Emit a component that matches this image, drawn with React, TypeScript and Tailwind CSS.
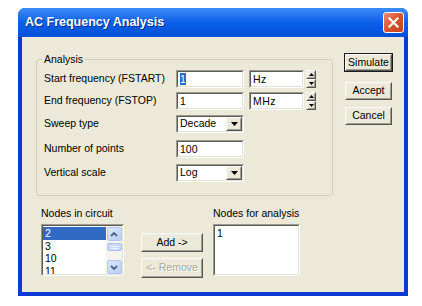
import React from 'react';

const Sunken = ({ className = '', children }: { className?: string; children?: React.ReactNode }) => (
  <div className={`border border-t-[#9c9a8f] border-l-[#9c9a8f] border-b-[#fefefe] border-r-[#fefefe] ${className}`}>
    <div className="h-full w-full border border-t-[#5a5a56] border-l-[#5a5a56] border-b-[#e4e2d8] border-r-[#e4e2d8] bg-white overflow-hidden">
      {children}
    </div>
  </div>
);

const Raised = ({ className = '', children }: { className?: string; children?: React.ReactNode }) => (
  <div className={`border border-t-[#fbfaf6] border-l-[#fbfaf6] border-b-[#55554f] border-r-[#55554f] ${className}`}>
    <div className="h-full w-full border border-t-[#ecebe4] border-l-[#ecebe4] border-b-[#a19f92] border-r-[#a19f92] bg-[#ECE9D8] flex items-center justify-center">
      {children}
    </div>
  </div>
);

function DownTri() {
  return (
    <svg width="7" height="4" viewBox="0 0 7 4">
      <path d="M0 0h7L3.5 4z" fill="#000" />
    </svg>
  );
}

function Combo({ value }: { value: string }) {
  return (
    <Sunken className="w-[68px] h-[18px]">
      <div className="flex h-full items-center">
        <span className="flex-1 pl-[2px] text-[10.5px] text-black">{value}</span>
        <Raised className="w-[16px] h-full">
          <DownTri />
        </Raised>
      </div>
    </Sunken>
  );
}

function Spinner() {
  return (
    <div className="flex flex-col w-[10px] h-[18px] ml-[2px]">
      <Raised className="h-[9px] w-full">
        <svg width="5" height="3" viewBox="0 0 5 3">
          <path d="M0 3h5L2.5 0z" fill="#000" />
        </svg>
      </Raised>
      <Raised className="h-[9px] w-full">
        <svg width="5" height="3" viewBox="0 0 5 3">
          <path d="M0 0h5L2.5 3z" fill="#000" />
        </svg>
      </Raised>
    </div>
  );
}

function UnitBox({ value }: { value: string }) {
  return (
    <div className="flex ml-[5px]">
      <Sunken className="w-[55px] h-[18px]">
        <div className="pl-[2px] leading-[14px] text-[10.5px] tracking-[0.5px]">{value}</div>
      </Sunken>
      <Spinner />
    </div>
  );
}

function Row({ label, children, className = '' }: { label: string; children: React.ReactNode; className?: string }) {
  return (
    <div className={`flex items-center h-[18px] ${className}`}>
      <span className="w-[132px] text-[10.5px] text-black">{label}</span>
      {children}
    </div>
  );
}

function TextBox({ children }: { children: React.ReactNode }) {
  return (
    <Sunken className="w-[68px] h-[18px]">
      <div className="pl-[2px] leading-[14px] text-[10.5px]">{children}</div>
    </Sunken>
  );
}

function Button({ label, def = false, disabled = false, className = '' }: { label: string; def?: boolean; disabled?: boolean; className?: string }) {
  const inner = (
    <Raised className="w-full h-full">
      <span className={`text-[10.5px] ${disabled ? 'text-[#aca899] [text-shadow:1px_1px_0_#fff]' : 'text-black'}`}>{label}</span>
    </Raised>
  );
  return def ? (
    <div className={`border border-[#1c1c1a] ${className}`}>{inner}</div>
  ) : (
    <div className={className}>{inner}</div>
  );
}

function ScrollArrow({ up }: { up?: boolean }) {
  return (
    <div className="h-[14px] w-[15px] rounded-[2px] border border-[#b3c6f2] bg-linear-to-br from-[#dce6fd] to-[#b9cdf9] flex items-center justify-center">
      <svg width="8" height="5" viewBox="0 0 8 5">
        <path d={up ? 'M1 4L4 1l3 3' : 'M1 1l3 3 3-3'} stroke="#4d6185" strokeWidth="1.8" fill="none" />
      </svg>
    </div>
  );
}

function CloseButton() {
  return (
    <div className="w-[21px] h-[21px] rounded-[3px] border border-white bg-linear-to-br from-[#e88a6c] via-[#d9532c] to-[#c2421f] flex items-center justify-center">
      <svg width="11" height="11" viewBox="0 0 11 11">
        <path d="M1.5 1.5l8 8M9.5 1.5l-8 8" stroke="#fff" strokeWidth="2.2" strokeLinecap="square" />
      </svg>
    </div>
  );
}

export default function App() {
  return (
    <div className="w-[422px] h-[306px] bg-white pt-[8px] pl-[18px] font-['Liberation_Sans',Arial,sans-serif]">
      <div className="w-[390px] h-[288px] rounded-t-[7px] bg-[#0a3bd4] flex flex-col overflow-hidden">
        <div className="h-[29px] shrink-0 bg-linear-to-b from-[#3d8bf7] via-[#0b5fe8] to-[#0550d8] flex items-center pl-[7px] pr-[4px]">
          <span className="flex-1 text-white font-bold text-[12.5px] [text-shadow:1px_1px_0_#0a2a8f]">AC Frequency Analysis</span>
          <CloseButton />
        </div>

        <div className="flex-1 mx-[4px] mb-[4px] bg-[#ECE9D8] text-black">
          <div className="flex pl-[14px] pt-[15px]">
            <fieldset className="w-[297px] border border-[#d0d0bf] rounded-[3px] px-[7px] pb-[13px]">
              <legend className="-ml-[2px] px-[2px] leading-[14px] text-[10.5px]">Analysis</legend>
              <Row label="Start frequency (FSTART)" className="mt-[4px]">
                <TextBox>
                  <span className="bg-[#316ac5] text-white">1</span>
                </TextBox>
                <UnitBox value="Hz" />
              </Row>
              <Row label="End frequency (FSTOP)" className="mt-[4px]">
                <TextBox>1</TextBox>
                <UnitBox value="MHz" />
              </Row>
              <Row label="Sweep type" className="mt-[5px]">
                <Combo value="Decade" />
              </Row>
              <Row label="Number of points" className="mt-[7px]">
                <TextBox>100</TextBox>
              </Row>
              <Row label="Vertical scale" className="mt-[6px]">
                <Combo value="Log" />
              </Row>
            </fieldset>

            <div className="ml-[11px] mt-[1px] flex flex-col w-[49px]">
              <Button label="Simulate" def className="h-[19px]" />
              <Button label="Accept" className="h-[18px] mt-[10px] mx-[1px]" />
              <Button label="Cancel" className="h-[18px] mt-[7px] mx-[1px]" />
            </div>
          </div>

          <div className="flex pl-[19px] mt-[10px] items-start">
            <div className="flex flex-col">
              <span className="leading-[14px] text-[10.5px]">Nodes in circuit</span>
              <Sunken className="w-[83px] h-[52px] mt-[4px]">
                <div className="flex h-full">
                  <div className="flex-1 text-[10.5px] leading-[12.5px] pt-[1px]">
                    <div className="bg-[#316ac5] text-white pl-[2px]">2</div>
                    <div className="pl-[2px]">3</div>
                    <div className="pl-[2px]">10</div>
                    <div className="pl-[2px]">11</div>
                  </div>
                  <div className="w-[16px] bg-[#f5f4ef] flex flex-col items-center pt-[1px]">
                    <ScrollArrow up />
                    <div className="mt-[2px] h-[8px] w-[15px] rounded-[2px] border border-[#aec2f0] bg-[#c9d8fc] flex flex-col justify-center items-center gap-[1px]">
                      <div className="w-[7px] h-[1px] bg-[#eef3ff]" />
                      <div className="w-[7px] h-[1px] bg-[#eef3ff]" />
                    </div>
                    <div className="flex-1" />
                    <ScrollArrow />
                  </div>
                </div>
              </Sunken>
            </div>

            <div className="ml-[17px] mt-[27px] flex flex-col w-[62px]">
              <Button label="Add ->" className="h-[19px]" />
              <Button label="<- Remove" disabled className="h-[20px] mt-[6px]" />
            </div>

            <div className="ml-[10px] flex flex-col">
              <span className="leading-[14px] text-[10.5px]">Nodes for analysis</span>
              <Sunken className="w-[87px] h-[52px] mt-[4px]">
                <div className="text-[10.5px] leading-[12.5px] pt-[1px] pl-[2px]">1</div>
              </Sunken>
            </div>
          </div>
        </div>
      </div>
    </div>
  );
}
